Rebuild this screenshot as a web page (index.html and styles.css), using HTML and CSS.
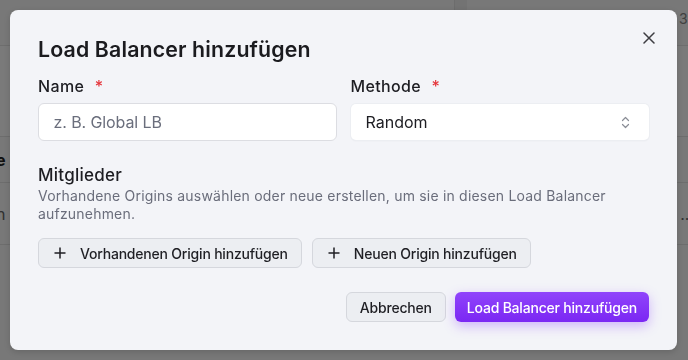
FILE: index.html
```html
<!DOCTYPE html>
<html lang="de">
<head>
<meta charset="utf-8">
<title>Load Balancer hinzufügen</title>
<link rel="stylesheet" href="styles.css">
</head>
<body>
<div class="page">
  <div class="page-top">
    <div class="page-top-left"></div>
    <div class="page-divider"></div>
    <div class="page-top-right">3</div>
  </div>
  <div class="page-row page-row-a"></div>
  <div class="page-row page-row-b"><span>e</span></div>
  <div class="page-row page-row-c"><span>n</span><span>n ...</span></div>
</div>
<div class="overlay"></div>
<div class="modal" role="dialog" aria-labelledby="dlg-title">
  <button class="close" aria-label="Schließen">
    <svg width="12" height="12" viewBox="0 0 12 12"><path d="M1 1L11 11M11 1L1 11" stroke="#3d3d42" stroke-width="1.5" stroke-linecap="round"/></svg>
  </button>
  <h2 id="dlg-title" class="title">Load Balancer hinzufügen</h2>
  <div class="fields">
    <div class="field">
      <label class="label">Name <span class="req">*</span></label>
      <div class="input"><span class="placeholder">z. B. Global LB</span></div>
    </div>
    <div class="field">
      <label class="label">Methode <span class="req">*</span></label>
      <div class="select">
        <span>Random</span>
        <svg width="9" height="13" viewBox="0 0 9 13"><path d="M1.5 4.5L4.5 1.5L7.5 4.5M1.5 8.5L4.5 11.5L7.5 8.5" fill="none" stroke="#8a8d96" stroke-width="1.2" stroke-linecap="round" stroke-linejoin="round"/></svg>
      </div>
    </div>
  </div>
  <div class="members">
    <h3 class="members-title">Mitglieder</h3>
    <p class="members-desc">Vorhandene Origins auswählen oder neue erstellen, um sie in diesen Load Balancer aufzunehmen.</p>
    <div class="member-actions">
      <button class="btn btn-add">
        <svg width="12" height="12" viewBox="0 0 12 12"><path d="M6 0.5V11.5M0.5 6H11.5" stroke="#1f1f24" stroke-width="1.5"/></svg>
        <span>Vorhandenen Origin hinzufügen</span>
      </button>
      <button class="btn btn-add">
        <svg width="12" height="12" viewBox="0 0 12 12"><path d="M6 0.5V11.5M0.5 6H11.5" stroke="#1f1f24" stroke-width="1.5"/></svg>
        <span>Neuen Origin hinzufügen</span>
      </button>
    </div>
  </div>
  <div class="footer">
    <button class="btn btn-cancel">Abbrechen</button>
    <button class="btn btn-primary">Load Balancer hinzufügen</button>
  </div>
</div>
</body>
</html>
```
FILE: styles.css
```css
* { box-sizing: border-box; }
html, body { margin: 0; padding: 0; }
body {
  width: 688px;
  height: 360px;
  overflow: hidden;
  background: #fafafa;
  font-family: Inter, "Noto Sans", sans-serif;
}
.page { width: 688px; height: 360px; display: flex; flex-direction: column; color: #222; }
.page-top { display: flex; height: 46px; border-bottom: 1px solid #e6e6e6; }
.page-top-left { flex: 0 0 454px; }
.page-divider { flex: 0 0 13px; background: #f0f0f0; border-left: 1px solid #e3e3e3; }
.page-top-right { flex: 1; padding: 10px 0 0 212px; font-size: 14px; color: #888; }
.page-row { border-bottom: 1px solid #e4e4e4; display: flex; justify-content: space-between; align-items: center; font-size: 16px; }
.page-row-a { height: 91px; background: #fff; }
.page-row-b { height: 46px; font-weight: 700; margin-left: -4px; }
.page-row-c { height: 62px; color: #666; margin-left: -4px; margin-right: -6px; }
.overlay { position: fixed; inset: 0; background: rgba(0,0,0,0.52); }
.modal {
  position: absolute;
  left: 10px;
  top: 10px;
  width: 667px;
  height: 340px;
  background: #f3f4f8;
  border-radius: 8px;
  padding: 25px 28px 28px;
  display: flex;
  flex-direction: column;
  box-shadow: 0 2px 6px rgba(0,0,0,0.15);
}
.close {
  position: absolute;
  right: 22px;
  top: 22px;
  width: 12px;
  height: 12px;
  padding: 0;
  border: 0;
  background: none;
  display: flex;
}
.title { margin: 0; font-size: 21.3px; line-height: 28px; font-weight: 600; color: #1b1b1f; letter-spacing: 0.15px; }
.fields { display: grid; grid-template-columns: 1fr 1fr; column-gap: 14px; margin-top: 12px; }
.field { display: flex; flex-direction: column; }
.label { font-size: 16px; line-height: 22px; font-weight: 500; color: #1d1d22; letter-spacing: 0.35px; }
.req { color: #e5343a; margin-left: 6px; }
.input {
  margin-top: 6px;
  height: 38px;
  background: #fff;
  border: 1.5px solid #dcdde2;
  border-radius: 6px;
  display: flex;
  align-items: center;
  padding-left: 14.5px;
}
.placeholder { font-size: 16px; color: #6a6e7c; letter-spacing: -0.1px; }
.select {
  margin-top: 7px;
  height: 36px;
  background: #fff;
  border-radius: 5px;
  box-shadow: 0 0 0 1px #eceef2, 0 1px 2px rgba(0,0,0,0.06);
  display: flex;
  align-items: center;
  justify-content: space-between;
  padding: 0 19px 0 15px;
  font-size: 16px;
  color: #1d1d22;
}
.members { margin-top: 22px; }
.members-title { margin: 0; font-size: 17px; line-height: 24px; font-weight: 500; color: #1d1d22; letter-spacing: 0.25px; }
.members-desc { margin: 0; font-size: 14px; line-height: 18px; color: #6a6d7b; letter-spacing: 0.2px; max-width: 590px; }
.member-actions { display: flex; gap: 10px; margin-top: 15px; }
.btn {
  font-family: inherit;
  font-size: 14px;
  font-weight: 500;
  height: 30px;
  border-radius: 6px;
  cursor: pointer;
  letter-spacing: -0.2px;
}
.btn-add {
  display: flex;
  align-items: center;
  gap: 14px;
  padding: 0 13px 0 15px;
  background: #eceef2;
  border: 1px solid #d5d7dd;
  color: #1f1f24;
}
.footer { margin-top: auto; display: flex; justify-content: flex-end; gap: 9px; }
.btn-cancel {
  padding: 0 13px;
  background: #eceef2;
  border: 1px solid #d5d7dd;
  color: #1f1f24;
}
.btn-primary {
  padding: 0 12px;
  border: 0;
  color: #fff;
  background: linear-gradient(180deg, #9044fb 0%, #7b27f3 100%);
  box-shadow: 0 4px 12px rgba(138, 60, 255, 0.35);
}
```
